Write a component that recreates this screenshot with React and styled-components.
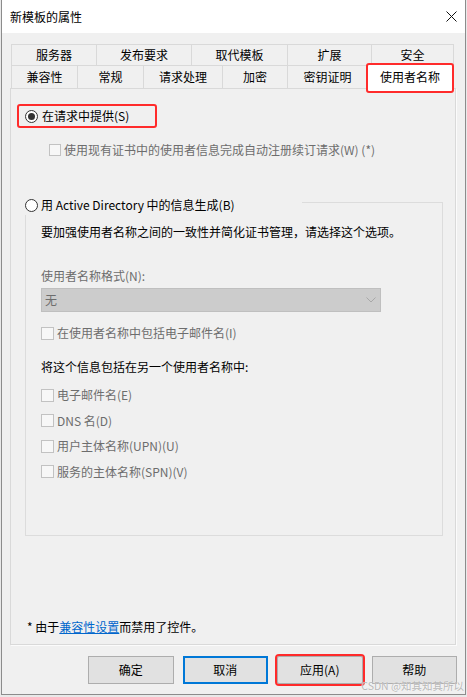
import React from 'react'
import styled, { createGlobalStyle } from 'styled-components'

const GlobalStyle = createGlobalStyle`
  html, body {
    margin: 0;
    padding: 0;
    background: #e9e9e9;
  }
  body {
    font-family: "Noto Sans CJK SC", "Noto Sans", sans-serif;
    font-size: 12px;
    color: #000;
  }
`

const RED = '#ff2b2b'
const GRAY_TEXT = '#6d6d6d'

const Window = styled.div`
  position: relative;
  width: 465px;
  height: 695px;
  margin-left: 1px;
  box-sizing: border-box;
  border: 1px solid #8c8c8c;
  border-top: none;
  background: #f0f0f0;
  display: flex;
  flex-direction: column;
  overflow: hidden;
`

const TitleBar = styled.div`
  height: 33px;
  flex: none;
  background: #fff;
  display: flex;
  align-items: center;
  justify-content: space-between;
  padding-left: 8px;
  line-height: 16px;
`

const CloseBox = styled.div`
  width: 28px;
  height: 33px;
  display: grid;
  place-items: center;
`

const Body = styled.div`
  flex: 1;
  display: flex;
  flex-direction: column;
  padding: 11px 8px 0 8px;
`

const TabRow = styled.div`
  display: flex;
  margin-left: 1px;
  height: ${p => p.$h}px;
`

const Tab = styled.div`
  box-sizing: border-box;
  width: ${p => p.$w}px;
  height: ${p => p.$h}px;
  border: 1px solid #d9d9d9;
  border-bottom: none;
  background: #f0f0f0;
  display: flex;
  align-items: center;
  justify-content: center;
  line-height: 16px;
  & + & {
    margin-left: -1px;
  }
`

const ActiveTab = styled.div`
  position: relative;
  z-index: 2;
  box-sizing: border-box;
  width: ${p => p.$w}px;
  height: 30px;
  margin: -2px 0 -5px -2px;
  align-self: flex-start;
  background: #fff;
  border: 2px solid ${RED};
  border-radius: 3px;
  display: flex;
  align-items: center;
  justify-content: center;
  padding-bottom: 2px;
  line-height: 16px;
`

const Panel = styled.div`
  position: relative;
  z-index: 1;
  box-sizing: border-box;
  width: 446px;
  height: 557px;
  border: 1px solid #d9d9d9;
  box-shadow: 1px 1px 0 #fbfbfb;
  background: #f0f0f0;
  display: flex;
  flex-direction: column;
  align-items: flex-start;
  padding: 15px 0 9px 6px;
`

const MarkedOption = styled.div`
  box-sizing: border-box;
  width: 140px;
  height: 24px;
  border: 2px solid ${RED};
  border-radius: 3px;
  display: flex;
  align-items: center;
  padding-left: 6px;
  gap: 4px;
  line-height: 16px;
`

const RadioCircle = styled.span`
  box-sizing: border-box;
  width: 13px;
  height: 13px;
  flex: none;
  border-radius: 50%;
  border: 1px solid #333;
  background: #fff;
  display: grid;
  place-items: center;
  &::after {
    content: '';
    width: 7px;
    height: 7px;
    border-radius: 50%;
    background: ${p => (p.$on ? '#333' : 'transparent')};
  }
`

const CheckRow = styled.div`
  display: flex;
  align-items: center;
  gap: ${p => p.$gap || 3}px;
  height: 16px;
  line-height: 16px;
  margin-top: ${p => p.$mt || 0}px;
  margin-left: ${p => p.$ml || 0}px;
  color: ${GRAY_TEXT};
  white-space: nowrap;
`

const Box = styled.span`
  box-sizing: border-box;
  width: ${p => p.$s || 13}px;
  height: ${p => p.$s || 13}px;
  flex: none;
  border: 1px solid #c2c2c2;
  background: #f7f7f7;
`

const GroupBox = styled.div`
  box-sizing: border-box;
  width: 418px;
  margin: 44px 0 0 8px;
  border: 1px solid #dcdcdc;
  padding: 0 0 55px 15px;
  display: flex;
  flex-direction: column;
  align-items: flex-start;
`

const Legend = styled.div`
  box-sizing: border-box;
  width: 277px;
  height: 20px;
  margin: -8px 0 0 -16px;
  background: #f0f0f0;
  display: flex;
  align-items: center;
  gap: 3px;
  line-height: 16px;
  white-space: nowrap;
`

const Text = styled.div`
  line-height: 16px;
  margin-top: ${p => p.$mt || 0}px;
  color: ${p => (p.$muted ? GRAY_TEXT : '#000')};
  white-space: nowrap;
`

const Select = styled.div`
  box-sizing: border-box;
  width: 340px;
  height: 24px;
  margin-top: 4px;
  background: #cccccc;
  border: 1px solid #bfbfbf;
  display: flex;
  align-items: center;
  justify-content: space-between;
  padding: 0 4px 0 3px;
  color: ${GRAY_TEXT};
  line-height: 16px;
`

const Footnote = styled.div`
  margin: auto 0 0 10px;
  line-height: 16px;
  white-space: nowrap;
`

const Link = styled.span`
  color: #0066cc;
  text-decoration: underline;
`

const ButtonRow = styled.div`
  display: flex;
  gap: 9px;
  margin-top: 11px;
  padding-left: 78px;
`

const Button = styled.div`
  box-sizing: border-box;
  width: 86px;
  height: 28px;
  background: #e1e1e1;
  border: ${p => (p.$focused ? '2px solid #0078d7' : '1px solid #adadad')};
  outline: ${p => (p.$marked ? `2px solid ${RED}` : 'none')};
  border-radius: ${p => (p.$marked ? '2px' : '0')};
  display: flex;
  align-items: center;
  justify-content: center;
  line-height: 16px;
`

const Watermark = styled.div`
  position: absolute;
  right: 1px;
  bottom: 1px;
  font-size: 10.5px;
  line-height: 14px;
  color: rgba(170, 170, 170, 0.85);
  text-shadow: 0 0 1px #fff;
  white-space: nowrap;
`

const backTabs = [
  ['服务器', 86],
  ['发布要求', 96],
  ['取代模板', 97],
  ['扩展', 85],
  ['安全', 83],
]

const frontTabs = [
  ['兼容性', 67],
  ['常规', 67],
  ['请求处理', 80],
  ['加密', 66],
  ['密钥证明', 81],
]

const extraNames = [
  '电子邮件名(E)',
  'DNS 名(D)',
  '用户主体名称(UPN)(U)',
  '服务的主体名称(SPN)(V)',
]

const CloseIcon = () => (
  <svg width="11" height="11" viewBox="0 0 11 11">
    <path d="M0.5 0.5 L10.5 10.5 M10.5 0.5 L0.5 10.5" stroke="#111" strokeWidth="1" fill="none" />
  </svg>
)

const Chevron = () => (
  <svg width="10" height="6" viewBox="0 0 10 6">
    <polyline points="0.5,0.5 5,5 9.5,0.5" stroke="#a8a8a8" strokeWidth="1" fill="none" />
  </svg>
)

export default function App() {
  return (
    <>
      <GlobalStyle />
      <Window>
        <TitleBar>
          <span>新模板的属性</span>
          <CloseBox>
            <CloseIcon />
          </CloseBox>
        </TitleBar>
        <Body>
          <TabRow $h={21}>
            {backTabs.map(([label, w]) => (
              <Tab key={label} $w={w} $h={21}>{label}</Tab>
            ))}
          </TabRow>
          <TabRow $h={23}>
            {frontTabs.map(([label, w]) => (
              <Tab key={label} $w={w} $h={23}>{label}</Tab>
            ))}
            <ActiveTab $w={88}>使用者名称</ActiveTab>
          </TabRow>
          <Panel>
            <MarkedOption>
              <RadioCircle $on />
              <span>在请求中提供(S)</span>
            </MarkedOption>
            <CheckRow $mt={14} $ml={32} $gap={3}>
              <Box $s={12} />
              <span>使用现有证书中的使用者信息完成自动注册续订请求(W) (*)</span>
            </CheckRow>
            <GroupBox>
              <Legend>
                <RadioCircle />
                <span>用 Active Directory 中的信息生成(B)</span>
              </Legend>
              <Text $mt={9}>要加强使用者名称之间的一致性并简化证书管理，请选择这个选项。</Text>
              <Text $mt={28} $muted>使用者名称格式(N):</Text>
              <Select>
                <span>无</span>
                <Chevron />
              </Select>
              <CheckRow $mt={13}>
                <Box />
                <span>在使用者名称中包括电子邮件名(I)</span>
              </CheckRow>
              <Text $mt={18}>将这个信息包括在另一个使用者名称中:</Text>
              {extraNames.map((name, i) => (
                <CheckRow key={name} $mt={i === 0 ? 12 : 9.5}>
                  <Box />
                  <span>{name}</span>
                </CheckRow>
              ))}
            </GroupBox>
            <Footnote>
              * 由于<Link>兼容性设置</Link>而禁用了控件。
            </Footnote>
          </Panel>
          <ButtonRow>
            <Button>确定</Button>
            <Button $focused>取消</Button>
            <Button $marked>应用(A)</Button>
            <Button>帮助</Button>
          </ButtonRow>
        </Body>
        <Watermark>CSDN @知其知其所以</Watermark>
      </Window>
    </>
  )
}
